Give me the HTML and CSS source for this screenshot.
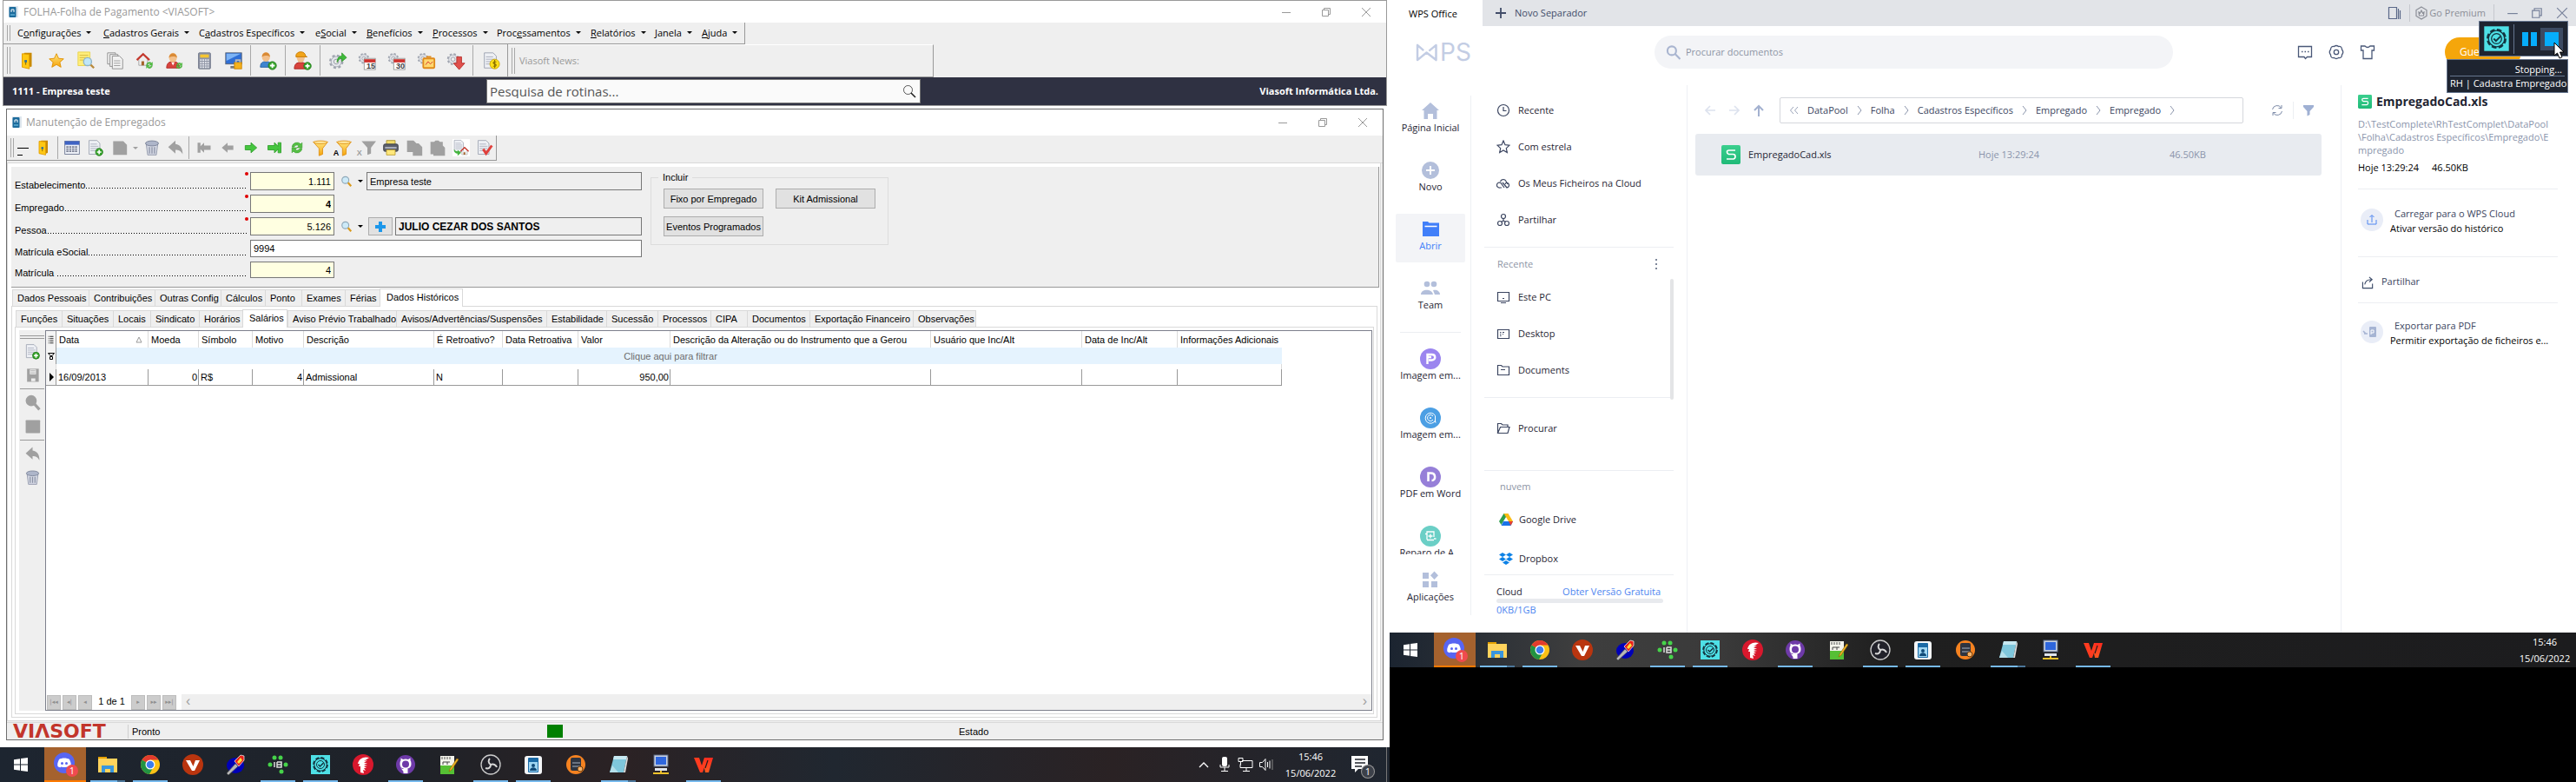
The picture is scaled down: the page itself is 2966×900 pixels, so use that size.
FILE: index.html
```html
<!DOCTYPE html>
<html lang="pt">
<head>
<meta charset="utf-8">
<title>FOLHA-Folha de Pagamento</title>
<link rel="stylesheet" href="styles.css">
</head>
<body>
<svg class="sprite" aria-hidden="true">
  <defs>
    <linearGradient id="gold" x1="0" y1="0" x2="0" y2="1"><stop offset="0" stop-color="#ffe680"/><stop offset="1" stop-color="#f5a30a"/></linearGradient>
    <linearGradient id="green" x1="0" y1="0" x2="0" y2="1"><stop offset="0" stop-color="#3bcf8e"/><stop offset="1" stop-color="#1fba78"/></linearGradient>
    <linearGradient id="wpsred" x1="0" y1="0" x2="0" y2="1"><stop offset="0" stop-color="#ff2a1f"/><stop offset="1" stop-color="#ff5a1f"/></linearGradient>
  </defs>
  <symbol id="app" viewBox="0 0 14 14"><rect x="2" y="0" width="11" height="13" fill="#dfe7ee"/><rect x="2.500" y="1" width="8" height="12" rx="1" fill="#1c6b9c"/><path d="M4 10h5" stroke="#7fd0ef"/><path d="M5 7V4h3v3" fill="none" stroke="#fff"/></symbol>
  <symbol id="door" viewBox="0 0 24 24"><path d="M7 4l2-2h9v17l-2 1z" fill="#c98a00"/><path d="M6 3l9 1v18l-9-2z" fill="#ffc814" stroke="#e09b00"/><rect x="9" y="11" width="3" height="3" fill="#2c6f9e"/><path d="M10.500 14v3" stroke="#7a5a00"/></symbol>
  <symbol id="star" viewBox="0 0 24 24"><path d="M12 3l2.700 6 6.300.6-4.800 4.200L17.700 20 12 16.700 6.300 20l1.500-6.200L3 9.600 9.300 9z" fill="url(#gold)" stroke="#e09000"/></symbol>
  <symbol id="page" viewBox="0 0 24 24"><path d="M3 2h11l4 4v15H3z" fill="#eef0f5" stroke="#9aa0ae"/><path d="M5 7h9M5 10h11M5 13h11M5 16h11" stroke="#a6abb9"/></symbol>
  <symbol id="docsearch" viewBox="0 0 24 24"><path d="M2 1h15v17H2z" fill="#ffee7a" stroke="#e8d24b"/><path d="M4 5h11M4 8h11M4 11h5" stroke="#d4b73c"/><circle cx="14" cy="13" r="5" fill="#bfe6f8" stroke="#8fb4c8" stroke-width="1.500"/><path d="M18 17l4 4" stroke="#b98a3c" stroke-width="2.500"/></symbol>
  <symbol id="docs" viewBox="0 0 24 24"><g fill="#f2f2f2" stroke="#8c8c8c"><path d="M2 2h10v14H2z"/><path d="M5 4h10v15H5z"/><path d="M8 6h9l4 4v12H8z"/></g><path d="M10 12h8M10 15h8M10 18h8" stroke="#999"/></symbol>
  <symbol id="cycle" viewBox="0 0 24 24"><path d="M5 11a7 7 0 0 1 12-4l2-2v7h-7l2.500-2.500A4 4 0 0 0 8 11zM19 13a7 7 0 0 1-12 4l-2 2v-7h7l-2.500 2.500A4 4 0 0 0 16 13z" fill="#57c046" stroke="#339a28" stroke-width=".7"/></symbol>
  <symbol id="house" viewBox="0 0 24 24"><path d="M5 11v9h13v-9" fill="#eee" stroke="#999"/><path d="M2 12L11.500 3 21 12" fill="none" stroke="#c43a2f" stroke-width="3"/><path d="M9 14h4v6H9z" fill="#a5632a"/></symbol>
  <symbol id="homecycle" viewBox="0 0 24 24"><use href="#house" width="20" height="22"/><use href="#cycle" x="11" y="11" width="13" height="13"/></symbol>
  <symbol id="plusball" viewBox="0 0 12 12"><circle cx="6" cy="6" r="5" fill="#38a52c" stroke="#1f7a18"/><path d="M6 3v6M3 6h6" stroke="#fff" stroke-width="2"/></symbol>
  <symbol id="userred" viewBox="0 0 24 24"><path d="M2 21c0-6 3-8 8-8s8 2 8 8z" fill="#d8433d" stroke="#b02a26"/><path d="M8 14l2 4 2-4z" fill="#fff"/><ellipse cx="10" cy="8" rx="5" ry="6" fill="#f3c08b"/><path d="M5 8c0-7 10-7 10 0-3-2-7-2-10 0z" fill="#d98a35"/></symbol>
  <symbol id="usercycle" viewBox="0 0 24 24"><use href="#userred"/><use href="#cycle" x="12" y="12" width="12" height="12"/></symbol>
  <symbol id="useradd" viewBox="0 0 24 24"><path d="M2 20c0-6 3-7 7-7s7 1 7 7z" fill="#3e85cf" stroke="#2561a3"/><ellipse cx="9" cy="7" rx="5" ry="6" fill="#f3c08b"/><path d="M4 7c0-7 10-7 10 0-3-2-7-2-10 0z" fill="#d98a35"/><use href="#plusball" x="11" y="12" width="12" height="12"/></symbol>
  <symbol id="worker" viewBox="0 0 24 24"><path d="M1 22c0-6 3-8 8-8s8 2 8 8z" fill="#d8433d" stroke="#a82421"/><ellipse cx="9" cy="8" rx="5" ry="6" fill="#f3c08b"/><path d="M3 6c0-7 12-7 12 0l2 1H3z" fill="#f2a51a" stroke="#c67a00"/><use href="#plusball" x="12" y="13" width="11" height="11"/></symbol>
  <symbol id="calc" viewBox="0 0 24 24"><rect x="5" y="2" width="15" height="20" rx="1" fill="#8f95a5" stroke="#6f7688"/><rect x="7" y="4" width="11" height="4" fill="#f5c531"/><path d="M7 11h11M7 14h11M7 17h11M7 20h11" stroke="#e7e9f0" stroke-width="2" stroke-dasharray="2 1"/></symbol>
  <symbol id="monitor" viewBox="0 0 24 24"><rect x="2" y="2" width="20" height="14" fill="#2f6fd6" stroke="#5a6373"/><path d="M3 3h18L3 12z" fill="#7db4f5"/><path d="M8 20h8" stroke="#777" stroke-width="3"/><rect x="13" y="14" width="9" height="8" fill="#f6b21b" stroke="#cc8400"/><path d="M15 14v-3h5v3" fill="none" stroke="#b9b9b9" stroke-width="2"/></symbol>
  <symbol id="cog" viewBox="0 0 24 24"><circle cx="10" cy="12" r="7" fill="#d9dce3" stroke="#a0a5b0" stroke-width="4" stroke-dasharray="3 2.500"/><circle cx="10" cy="12" r="6.500" fill="#e3e5ea" stroke="#a9adb7"/><circle cx="10" cy="12" r="3" fill="#efefef" stroke="#8f94a0"/></symbol>
  <symbol id="gearrun" viewBox="0 0 24 24"><use href="#cog" y="1"/><path d="M11 14c0-6 3-8 6-8V2l6 6-6 5V9c-3 0-4 2-6 5z" fill="#3fba3a" stroke="#258a20" stroke-width=".7"/></symbol>
  <symbol id="gearcal" viewBox="0 0 24 24"><use href="#cog" width="18" height="18"/><rect x="8" y="9" width="14" height="14" fill="#fff" stroke="#999"/><path d="M8 10h14v4H8z" fill="#cf2f2b"/></symbol>
  <symbol id="gearbox" viewBox="0 0 24 24"><use href="#cog" width="18" height="18"/><rect x="8" y="9" width="14" height="12" rx="1" fill="#ffd870" stroke="#e08a1a" stroke-width="2"/><path d="M11 17l3-4 3 3 3-3" fill="none" stroke="#d2332d"/><path d="M12 7h6" stroke="#e08a1a" stroke-width="2"/></symbol>
  <symbol id="geardown" viewBox="0 0 24 24"><use href="#cog" width="20" height="20"/><path d="M13 7h6v8h4l-7 8-7-8h4z" fill="#e0504c" stroke="#b82f2c"/></symbol>
  <symbol id="docmoney" viewBox="0 0 24 24"><use href="#page" x="1"/><circle cx="17" cy="16" r="6" fill="#ffe11a" stroke="#c9a400"/><path d="M19 13.500c-4-1.500-5 2-2 2.500s2 4-2 2.500M17 11v10" fill="none" stroke="#8c7000" stroke-width="1.300"/></symbol>
  <symbol id="table" viewBox="0 0 24 24"><rect x="2" y="3" width="20" height="18" fill="#eef1f8" stroke="#66708c"/><path d="M2 3h20v5H2z" fill="#3f63c4"/><path d="M4 11h16M4 14h16M4 17h16" stroke="#7b8194" stroke-width="2" stroke-dasharray="3 1"/></symbol>
  <symbol id="docadd" viewBox="0 0 24 24"><use href="#page"/><use href="#plusball" x="11" y="12" width="12" height="12"/></symbol>
  <symbol id="greydoc" viewBox="0 0 24 24"><path d="M4 3h14l5 5v14H4z" fill="#a0a0a0"/></symbol>
  <symbol id="greysq" viewBox="0 0 24 24"><rect x="2" y="3" width="21" height="19" rx="1" fill="#a0a0a0"/></symbol>
  <symbol id="trash" viewBox="0 0 24 24"><path d="M4 7h16l-2 15H6z" fill="#d3d7e2" stroke="#8a91a5"/><ellipse cx="12" cy="6" rx="9" ry="3.500" fill="#aeb6ca" stroke="#747c92"/><path d="M8.500 11v9M12 11v9M15.500 11v9" stroke="#8a91a5" stroke-width="1.500"/></symbol>
  <symbol id="undo" viewBox="0 0 24 24"><path d="M2 11L12 2v5c7 1 10 6 10 14-3-5-5-6-10-6v5z" fill="#a0a0a0"/></symbol>
  <symbol id="first" viewBox="0 0 24 24"><path d="M3 5h4v5l5-5v4h9v6h-9v4l-5-5v5H3z" fill="#a0a0a0"/></symbol>
  <symbol id="prev" viewBox="0 0 24 24"><path d="M4 12l8-7v4h8v6h-8v4z" fill="#a0a0a0"/></symbol>
  <symbol id="next" viewBox="0 0 24 24"><path d="M20 12l-8-7v4H4v6h8v4z" fill="#45c53f" stroke="#2c9c28"/></symbol>
  <symbol id="last" viewBox="0 0 24 24"><path d="M21 5h-4v5l-5-5v4H3v6h9v4l5-5v5h4z" fill="#45c53f" stroke="#2c9c28"/></symbol>
  <symbol id="funnel" viewBox="0 0 24 24"><path d="M2 4h20l-7 9v8l-5 2V13z" fill="url(#gold)" stroke="#dd8d10"/><ellipse cx="12" cy="4.500" rx="9.500" ry="2" fill="#ffe9a0" stroke="#dd8d10"/></symbol>
  <symbol id="greyfunnel" viewBox="0 0 24 24"><path d="M4 3h20l-7 9v8l-5 2V12z" fill="#a0a0a0"/></symbol>
  <symbol id="printer" viewBox="0 0 24 24"><path d="M6 2h12v6H6z" fill="#f3dd6c" stroke="#a58e2a"/><rect x="2" y="7" width="20" height="10" rx="2" fill="#5b5f6b" stroke="#33363e"/><path d="M4 12h16" stroke="#b8bcc8" stroke-width="2"/><path d="M6 15h12v7H6z" fill="#ffe87c" stroke="#b89a2c"/></symbol>
  <symbol id="copy" viewBox="0 0 24 24"><path d="M2 2h9l4 4h3l5 5v12H10v-5H2z" fill="#a0a0a0"/></symbol>
  <symbol id="paste" viewBox="0 0 24 24"><path d="M2 4h5l2-2h4l2 2h4v5l3 3v11H6v-2H2z" fill="#a0a0a0"/></symbol>
  <symbol id="dochome" viewBox="0 0 24 24"><rect width="24" height="24" fill="#fff"/><use href="#page" width="20" height="20"/><use href="#house" x="10" y="10" width="14" height="14"/><path d="M2 14c0 4 2 6 5 6v3l5-4-5-4v2c-2 0-3-1-5-3z" fill="#45b53f"/></symbol>
  <symbol id="doccheck" viewBox="0 0 24 24"><use href="#page"/><path d="M10 14l4 6 8-11" fill="none" stroke="#e0403c" stroke-width="3.500"/></symbol>
  <symbol id="floppy" viewBox="0 0 24 24"><path d="M4 3h17v19H4z" fill="#a0a0a0"/><path d="M8 4h9v7H8zM10 17h6v4h-6z" fill="#efefef"/><path d="M9 6h7M9 9h7" stroke="#a0a0a0"/></symbol>
  <symbol id="greyzoom" viewBox="0 0 24 24"><circle cx="10" cy="9" r="8" fill="#a0a0a0"/><path d="M15 14l7 8" stroke="#a0a0a0" stroke-width="4"/></symbol>
  <symbol id="lens" viewBox="0 0 16 16"><circle cx="6.500" cy="6" r="4.500" fill="#cdeaf8" stroke="#8fa8b8" stroke-width="1.300"/><path d="M10 9.500l4 4.500" stroke="#d99a1c" stroke-width="2.500"/></symbol>
  <symbol id="magnify" viewBox="0 0 16 16"><circle cx="6.500" cy="6.500" r="5" fill="none" stroke="#555" stroke-width="1"/><path d="M10 10l5 5" stroke="#222" stroke-width="1.600"/></symbol>
  <symbol id="cross" viewBox="0 0 14 14"><path d="M5 1h4v4h4v4H9v4H5V9H1V5h4z" fill="#1c97ea"/></symbol>
  <symbol id="wmin" viewBox="0 0 12 12"><path d="M1 6.500h10" stroke="currentColor"/></symbol>
  <symbol id="wmax" viewBox="0 0 12 12"><path d="M1.500 3.500h7v7h-7zM3.500 3V1.500h7v7H9" fill="none" stroke="currentColor"/></symbol>
  <symbol id="wclose" viewBox="0 0 12 12"><path d="M1 1l10 10M11 1L1 11" stroke="currentColor"/></symbol>

  <symbol id="t-win" viewBox="0 0 24 24"><path d="M4 6.200L11 5.200v6.300H4zM12 5l8-1.100v7.600h-8zM4 12.500h7v6.300l-7-1zM12 12.500h8v7.600L12 19z" fill="#fff"/></symbol>
  <symbol id="t-discord" viewBox="0 0 26 26"><circle cx="12" cy="12" r="12" fill="#5865f2"/><path d="M6 8c3-2 9-2 12 0 2 4 2 6 1.500 8-2 1.500-3 1.500-4 .5-2 .7-5 .7-7 0-1 1-2 1-4-.5C4 14 4 12 6 8z" fill="#fff"/><circle cx="9.500" cy="12.500" r="1.500" fill="#5865f2"/><circle cx="14.500" cy="12.500" r="1.500" fill="#5865f2"/></symbol>
  <symbol id="t-folder" viewBox="0 0 24 24"><path d="M1 3h10v4H1z" fill="#e6a100"/><path d="M1 5h22v16H1z" fill="#ffd35c"/><path d="M5 13h14v8h-4v-4H9v4H5z" fill="#3a96dd"/></symbol>
  <symbol id="t-chrome" viewBox="0 0 24 24"><circle cx="12" cy="12" r="11" fill="#fbc116"/><path d="M12 12L2.500 6.500A11 11 0 0 1 21.500 6.500H12z" fill="#e33b2e"/><path d="M12 12L2.500 6.500A11 11 0 0 0 11 23l5-9z" fill="#229342"/><circle cx="12" cy="12" r="5.500" fill="#fff"/><circle cx="12" cy="12" r="4.300" fill="#3b7ded"/></symbol>
  <symbol id="t-v" viewBox="0 0 24 24"><circle cx="12" cy="12" r="12" fill="#b9350f"/><path d="M4 7h5l3.500 7L15 7h5l-6 12h-3z" fill="#fff"/></symbol>
  <symbol id="t-torch" viewBox="0 0 24 24"><ellipse cx="12" cy="13" rx="10" ry="9" fill="#0000b8"/><path d="M2 22l10-11 3 3L4 24z" fill="#b8b8b8" stroke="#555" stroke-width=".7"/><path d="M11 8l7-7 4 1v5l-6 7z" fill="#e8201a" stroke="#fff" stroke-width=".7"/><path d="M14 9l4-5 2 3-4 4z" fill="#ffde3a"/></symbol>
  <symbol id="t-ib" viewBox="0 0 24 24"><g fill="#46d34a"><circle cx="8" cy="4" r="2.500"/><circle cx="15" cy="4" r="2.500"/><circle cx="3" cy="12" r="2.500"/><circle cx="21" cy="12" r="2.500"/><circle cx="16" cy="20" r="2.500"/></g><path d="M8 9v6M11 9v6h5V9h-5M11 12h5" fill="none" stroke="#ddd" stroke-width="1.500"/></symbol>
  <symbol id="t-check" viewBox="0 0 24 24"><rect x="1" y="1" width="22" height="22" fill="#4ee0e6"/><g fill="none" stroke="#13333f"><circle cx="12" cy="12" r="8" stroke-width="1.800" stroke-dasharray="4.300 2"/><circle cx="12" cy="12" r="7.200" stroke-width="1"/><circle cx="12" cy="12" r="4.500"/><path d="M9.500 12l2 2 4-4" stroke-width="1.500"/></g></symbol>
  <symbol id="t-helmet" viewBox="0 0 24 24"><circle cx="12" cy="12" r="12" fill="#d8182d"/><path d="M19 4c-6-2-12 1-13 7l2 0-1 3 2 0 0 7 4 1-1-4 3 1-2-3 3 0-3-2 4-1-4-1 4-2-4 0 4-3-4 1z" fill="#fff"/></symbol>
  <symbol id="t-github" viewBox="0 0 24 24"><circle cx="12" cy="12" r="11" fill="#6e3aa8"/><path d="M9.500 20v-3c-3 0-3-2-4-2.500M5.500 11c0-2 .5-3 1-3.700L6.500 4.500 9 6a10 10 0 0 1 6 0l2.500-1.500v2.800c.5.700 1 1.700 1 3.700 0 4-2 5-4 5.300v5.700h-5v-5.700C7.500 16 5.500 15 5.500 11z" fill="#fff"/><circle cx="12" cy="11.500" r="4" fill="#6e3aa8"/></symbol>
  <symbol id="t-notes" viewBox="0 0 24 24"><rect x="3" y="2" width="16" height="21" fill="#f4f4ec"/><path d="M3 13h16v10H3z" fill="#56c034"/><path d="M5 3v3M8 3v3M11 3v3M14 3v3" stroke="#555"/><path d="M6 9h8M6 9v3M11 9v3" stroke="#444"/><path d="M22 5l-8 12-1 3 3-2 8-12z" fill="#f0b429" stroke="#8a6100" stroke-width=".6"/></symbol>
  <symbol id="t-obs" viewBox="0 0 24 24"><circle cx="12" cy="12" r="11" fill="#22222a" stroke="#ccc" stroke-width="1.300"/><g fill="none" stroke="#d8d8d8" stroke-width="2"><path d="M12 12c-3-2-3-5-1-7"/><path d="M12 12c3-1 6 0 7 3"/><path d="M12 12c0 4-3 5-6 4"/></g></symbol>
  <symbol id="t-card" viewBox="0 0 24 24"><rect x="2" y="2" width="20" height="21" rx="3" fill="#f4f6f8"/><rect x="6" y="4" width="12" height="17" rx="1" fill="#1a6aa6"/><rect x="7" y="9" width="10" height="11" fill="#9fd6f2"/><circle cx="12" cy="13" r="2" fill="#104a78"/><path d="M8 19c0-5 8-5 8 0z" fill="#104a78"/></symbol>
  <symbol id="t-orange" viewBox="0 0 24 24"><circle cx="12" cy="12" r="11" fill="#f58220"/><rect x="6" y="4" width="12" height="15" rx="2" fill="#2e3440"/><path d="M8 10h9M8 14h9" stroke="#7f8896" stroke-width="1.500"/><circle cx="17" cy="17" r="3" fill="#f7b267" stroke="#6a3a0a"/></symbol>
  <symbol id="t-pad" viewBox="0 0 24 24"><path d="M7 2h15l-4 19H2z" fill="#7fc7dc"/><path d="M7 2h15l-1 4H6z" fill="#c7e9f2"/><path d="M18 21l4-19 1 3-3 16z" fill="#ddd"/><path d="M2 21l3-8 7 8z" fill="#b4dfea"/></symbol>
  <symbol id="t-pc" viewBox="0 0 24 24"><rect x="4" y="1" width="16" height="13" fill="#c9d2e2" stroke="#5c6b85"/><rect x="6" y="3" width="12" height="9" fill="#2e66dd"/><path d="M5 16h14v3H5z" fill="#dfe4ec"/><path d="M12 19v3M3 22h18" stroke="#efc12b" stroke-width="2"/></symbol>
  <symbol id="t-wps" viewBox="0 0 24 24"><path d="M1 4h6l3 9 3-9h4l-6 17H8z" fill="#ff3b1f"/><path d="M14 4h9l-5 17h-4l-1-5z" fill="url(#wpsred)"/><path d="M17 7l-3 9" stroke="#251a1c" stroke-width="1.200"/></symbol>
  <symbol id="y-up" viewBox="0 0 18 18"><path d="M4 12l5-5 5 5" fill="none" stroke="#fff" stroke-width="1.300"/></symbol>
  <symbol id="y-mic" viewBox="0 0 18 18"><rect x="6" y="0" width="6" height="11" rx="2" fill="#fff"/><path d="M4 9v3h10V9M9 12v4M5 16.500h8" fill="none" stroke="#fff"/></symbol>
  <symbol id="y-net" viewBox="0 0 18 18"><path d="M5 4.500h12v8H3v-4M10 12v4M6 16.500h8" fill="none" stroke="#fff"/><path d="M1 1.500h5v4H1zM3.500 5.500v4" fill="none" stroke="#fff"/></symbol>
  <symbol id="y-vol" viewBox="0 0 18 18"><path d="M1.500 6.500h3l3.500-4v13l-3.500-4h-3zM10.500 6v6M13 4.500v9" fill="none" stroke="#fff"/><path d="M16 3v12" stroke="#888"/></symbol>
  <symbol id="y-note" viewBox="0 0 30 30"><path d="M2 3h19v15H10l-4 4v-4H2z" fill="#fff"/><path d="M6 7h12M6 11h12M6 15h8" stroke="#20242d" stroke-width="1.500"/></symbol>

  <symbol id="w-home" viewBox="0 0 24 24"><path d="M12 2L2 11h2.500v10h4.500v-6h6v6h4.500V11H22z" fill="#b3bfdb"/></symbol>
  <symbol id="w-new" viewBox="0 0 24 24"><circle cx="12" cy="12" r="10" fill="#b3bfdb"/><path d="M12 7v10M7 12h10" stroke="#fff" stroke-width="2"/></symbol>
  <symbol id="w-open" viewBox="0 0 24 24"><path d="M3 3h6l1.500 1.500H22V20H3z" fill="#417ff9"/><path d="M5.500 8.500h14" stroke="#fff" stroke-width="1.500"/></symbol>
  <symbol id="w-team" viewBox="0 0 24 24"><g fill="#b3bfdb"><circle cx="8" cy="7" r="3.300"/><circle cx="16" cy="7" r="3.300"/><path d="M1 19c0-7 13-7 14 0zM15 14c4-1 8 1 8 5h-6z"/></g></symbol>
  <symbol id="w-p" viewBox="0 0 24 24"><circle cx="12" cy="12" r="12" fill="#9b85ef"/><path d="M8.500 18V7h5c5 0 5 6.500 0 6.500H10M9 10h4" fill="none" stroke="#fff" stroke-width="2.400"/></symbol>
  <symbol id="w-c" viewBox="0 0 24 24"><circle cx="12" cy="12" r="12" fill="#4c9fe4"/><g fill="none" stroke="#fff" stroke-width="1"><path d="M17.500 15a6 6 0 1 1 0-5.500V17h1"/><path d="M15 14a3.500 3.500 0 1 1 0-4"/><circle cx="12" cy="12" r=".7"/></g></symbol>
  <symbol id="w-d" viewBox="0 0 24 24"><circle cx="12" cy="12" r="12" fill="#967fd8"/><path d="M9.500 17V7.500h3c6 0 6 8.500 1 8.500" fill="none" stroke="#fff" stroke-width="2.500"/></symbol>
  <symbol id="w-r" viewBox="0 0 24 24"><circle cx="12" cy="12" r="12" fill="#6bcfc6"/><path d="M8 16V7h8v6M8 16.500h8M12 9.500v5M9.500 12h5M6 9.500h2M16 15h2.500" fill="none" stroke="#fff" stroke-width="1.300"/></symbol>
  <symbol id="w-apps" viewBox="0 0 24 24"><path d="M3 3h7v7H3zM3 13h7v7H3zM13 13h7v7h-7zM16.500 1.500L21 6.300 16.500 11 12 6.300z" fill="#b3bfdb"/></symbol>
  <symbol id="l-clock" viewBox="0 0 16 16"><circle cx="8" cy="8" r="6.500"/><path d="M8 4v4.500h3.500"/></symbol>
  <symbol id="l-star" viewBox="0 0 16 16"><path d="M8 1l2 4.700 5 .5-3.700 3.400 1 5L8 12l-4.300 2.600 1-5L1 6.200l5-.5z"/></symbol>
  <symbol id="l-cloud" viewBox="0 0 16 16"><path d="M9 13L5 7.500a3 3 0 1 0-1 5.500h2M4.500 6A3.500 3.500 0 0 1 11 5.500M7 7l5 6a2.800 2.800 0 1 0-1-5.500L10 9M11 5.500L13 9"/></symbol>
  <symbol id="l-share" viewBox="0 0 16 16"><circle cx="8" cy="4" r="2.500"/><circle cx="4" cy="12" r="2.500"/><circle cx="12" cy="12" r="2.500"/><path d="M8 6.500V9L5.500 10.500M8 9l2.500 1.500"/></symbol>
  <symbol id="l-pc" viewBox="0 0 16 16"><path d="M1.500 2.500h13v10h-13zM5 14.500h6M7 9.500h2"/></symbol>
  <symbol id="l-desk" viewBox="0 0 16 16"><path d="M1.500 3.500h13v10h-13zM4 6.500h1.500M4 8.500h1.500M4 10.500h1.500M7 6.500h2M7 8.500h1"/></symbol>
  <symbol id="l-doc" viewBox="0 0 16 16"><path d="M1.500 2.500h4l1.500 1.500h7.500v9.500h-13zM5 7.500h5"/></symbol>
  <symbol id="l-open" viewBox="0 0 16 16"><path d="M1.500 13.500v-11h4L7 4h6v2.500M1.500 13.500l3-7H15l-2 7z"/></symbol>
  <symbol id="l-drive" viewBox="0 0 16 16"><path d="M5.500 1h5L5 10l-2.500 4L0 10z" fill="#2e9e4f"/><path d="M5.500 1h5L16 10h-5z" fill="#fbbc13"/><path d="M5 10h11l-2.500 5H2.500z" fill="#1a73e8"/><path d="M11 10h5l-2.500 5z" fill="#e8402f"/><path d="M8 6l2.500 4h-5z" fill="#fff"/></symbol>
  <symbol id="l-drop" viewBox="0 0 16 16"><path d="M4 1l4 2.500L4 6 0 3.500zM12 1l4 2.500L12 6 8 3.500zM4 6l4 2.500L4 11 0 8.500zM12 6l4 2.500-4 2.500-4-2.500zM8 10l4 2.500L8 15l-4-2.500z" fill="#0d82e6"/></symbol>
  <symbol id="l-find" viewBox="0 0 16 16"><circle cx="6.500" cy="6" r="4.700"/><path d="M10 9.500l5.500 5.500"/></symbol>
  <symbol id="x-back" viewBox="0 0 14 14"><path d="M13 7H2M7 2L2 7l5 5" fill="none" stroke="currentColor" stroke-width="1.700"/></symbol>
  <symbol id="x-fwd" viewBox="0 0 14 14"><path d="M1 7h11M7 2l5 5-5 5" fill="none" stroke="currentColor" stroke-width="1.700"/></symbol>
  <symbol id="x-up" viewBox="0 0 14 14"><path d="M7 14V2M2 7l5-5 5 5" fill="none" stroke="currentColor" stroke-width="2"/></symbol>
  <symbol id="x-chev" viewBox="0 0 8 12"><path d="M2 1l4 5-4 5" fill="none" stroke="#8a94ab"/></symbol>
  <symbol id="x-dbl" viewBox="0 0 12 12"><path d="M5 2L1.500 6 5 10M10 2L6.500 6 10 10" fill="none" stroke="#9aa3b8"/></symbol>
  <symbol id="x-sync" viewBox="0 0 14 14"><path d="M1.500 6a5.500 5.500 0 0 1 10-2M12.500 8a5.500 5.500 0 0 1-10 2M12 1v3.500H8.500M2 13V9.500h3.500" fill="none" stroke="#7d8ba8"/></symbol>
  <symbol id="x-funnel" viewBox="0 0 14 14"><path d="M1 1h12v2L8.500 8v4l-3 1.500V8L1 3z" fill="#9fb0d3"/></symbol>
  <symbol id="x-sheet" viewBox="0 0 22 22"><rect width="22" height="22" rx="2" fill="url(#green)"/><path d="M16 6H8.500Q6.500 6 6.500 8t2 2.500h5Q16 10.500 16 13t-2 3H6" fill="none" stroke="#fff" stroke-width="1.700"/></symbol>
  <symbol id="x-msg" viewBox="0 0 18 18"><path d="M1.500 2.500h15v12h-5L9.500 16.500 8 14.500H1.500zM5 8.500h1.500M8.500 8.500H10M12 8.500h1.500" fill="none" stroke="#4a5878" stroke-width="1.300"/></symbol>
  <symbol id="x-set" viewBox="0 0 18 18"><path d="M6.500 2.500Q9 .5 11.500 2.500q4-.5 4 3.500Q18 9 15.500 12q0 4-4 3.500-2.500 2-5 0-4 .5-4-3.500Q0 9 2.500 6q0-4 4-3.500z" fill="none" stroke="#4a5878" stroke-width="1.300"/><circle cx="9" cy="9" r="2.700" fill="none" stroke="#4a5878" stroke-width="1.300"/></symbol>
  <symbol id="x-shirt" viewBox="0 0 18 18"><path d="M1.500 2h4.500q3 3 6 0h4.500v5h-2.500v9.500H4V7H1.500z" fill="none" stroke="#4a5878" stroke-width="1.300"/></symbol>
  <symbol id="x-dock" viewBox="0 0 16 16"><path d="M1.500 1.500h9v13h-9zM12.500 3v12M14.500 5v10" fill="none" stroke="#5a6888" stroke-width="1.200"/></symbol>
  <symbol id="x-prem" viewBox="0 0 16 16"><path d="M8 1l6 3.500v7L8 15l-6-3.500v-7zM5 7l1.500 1L8 5l1.500 3L11 7l-.5 4h-5z" fill="none" stroke="#8b8e97" stroke-width="1.200"/></symbol>
  <symbol id="x-upload" viewBox="0 0 26 26"><circle cx="13" cy="13" r="13" fill="#e9edf7"/><path d="M8 13v5h10v-5M13 16V8M10.500 10L13 7.500l2.500 2.500" fill="none" stroke="#4f86f0"/></symbol>
  <symbol id="x-pdf" viewBox="0 0 26 26"><circle cx="13" cy="13" r="13" fill="#e9edf7"/><rect x="10" y="7" width="8" height="12" rx="1" fill="#a6b4d3"/><path d="M12 16v-5h3v3h-3" fill="none" stroke="#fff"/><path d="M3 12l3 3M4 15h4" stroke="#a6b4d3" stroke-width="1.500"/></symbol>
  <symbol id="x-send" viewBox="0 0 16 16"><path d="M1.500 7v7.500h12V9M4 10q1-6 8-6M9.500 1L13 4 9.500 7" fill="none" stroke="#3b4a68" stroke-width="1.200"/></symbol>
</svg>

<main class="desktop">
<section class="screen">
  <section class="win main-win">
    <header class="title"><svg class="i14"><use href="#app"/></svg><span>FOLHA-Folha de Pagamento &lt;VIASOFT&gt;</span>
      <div class="ctl"><button aria-label="Minimizar"><svg><use href="#wmin"/></svg></button><button aria-label="Restaurar"><svg><use href="#wmax"/></svg></button><button aria-label="Fechar"><svg><use href="#wclose"/></svg></button></div></header>
    <nav class="menu"><i class="grip"></i>
      <div class="menu-items"><button>C<u>o</u>nfigurações</button><button><u>C</u>adastros Gerais</button><button>C<u>a</u>dastros Específicos</button><button>e<u>S</u>ocial</button><button><u>B</u>enefícios</button><button><u>P</u>rocessos</button><button>Proc<u>e</u>ssamentos</button><button><u>R</u>elatórios</button><button><u>J</u>anela</button><button><u>A</u>juda</button></div>
    </nav>
    <div class="bars">
      <div class="bar bar-wide"><i class="grip"></i>
        <button aria-label="Sair"><svg><use href="#door"/></svg></button><button aria-label="Favoritos"><svg><use href="#star"/></svg></button><button aria-label="Consultar"><svg><use href="#docsearch"/></svg></button><button aria-label="Documentos"><svg><use href="#docs"/></svg></button><button aria-label="Trocar empresa"><svg><use href="#homecycle"/></svg></button><button aria-label="Trocar usuário"><svg><use href="#usercycle"/></svg></button><button aria-label="Calculadora"><svg><use href="#calc"/></svg></button><button aria-label="Bloquear"><svg><use href="#monitor"/></svg></button><i class="sep"></i><button aria-label="Incluir pessoa"><svg><use href="#useradd"/></svg></button><i class="sep"></i><button aria-label="Incluir empregado"><svg><use href="#worker"/></svg></button><i class="sep"></i><button aria-label="Processar"><svg><use href="#gearrun"/></svg></button><button aria-label="Quinzena" class="tagged"><svg><use href="#gearcal"/></svg><span class="day">15</span></button><button aria-label="Mensal" class="tagged"><svg><use href="#gearcal"/></svg><span class="day">30</span></button><button aria-label="Férias"><svg><use href="#gearbox"/></svg></button><button aria-label="Rescisão"><svg><use href="#geardown"/></svg></button><i class="sep"></i><button aria-label="Recibo"><svg><use href="#docmoney"/></svg></button>
      </div>
      <div class="news"><i class="grip"></i><span>Viasoft News:</span></div>
    </div>
    <div class="dark"><strong>1111 - Empresa teste</strong>
      <label class="seek"><input type="text" placeholder="Pesquisa de rotinas..." aria-label="Pesquisa de rotinas"><svg><use href="#magnify"/></svg></label>
      <strong class="owner">Viasoft Informática Ltda.</strong></div>
  </section>

  <section class="win child">
    <header class="title tall"><svg class="i14"><use href="#app"/></svg><span>Manutenção de Empregados</span>
      <div class="ctl"><button aria-label="Minimizar"><svg><use href="#wmin"/></svg></button><button aria-label="Restaurar"><svg><use href="#wmax"/></svg></button><button aria-label="Fechar"><svg><use href="#wclose"/></svg></button></div></header>
    <div class="band"><div class="bar bar-small"><i class="grip"></i><span class="dash"></span>
      <button aria-label="Sair"><svg><use href="#door"/></svg></button><i class="sep"></i><button aria-label="Tabela"><svg><use href="#table"/></svg></button><button aria-label="Incluir"><svg><use href="#docadd"/></svg></button><button aria-label="Gravar"><svg><use href="#greydoc"/></svg></button><button class="drop" aria-label="Mais"></button><button aria-label="Excluir"><svg><use href="#trash"/></svg></button><button aria-label="Desfazer"><svg><use href="#undo"/></svg></button><i class="sep"></i><button aria-label="Primeiro"><svg><use href="#first"/></svg></button><button aria-label="Anterior"><svg><use href="#prev"/></svg></button><button aria-label="Próximo"><svg><use href="#next"/></svg></button><button aria-label="Último"><svg><use href="#last"/></svg></button><button aria-label="Atualizar"><svg><use href="#cycle"/></svg></button><button aria-label="Filtro"><svg><use href="#funnel"/></svg></button><button aria-label="Filtro avançado" class="tagged"><svg><use href="#funnel"/></svg><span class="letter">A</span></button><button aria-label="Limpar filtro" class="tagged"><svg><use href="#greyfunnel"/></svg><span class="letter dim">X</span></button><button aria-label="Imprimir"><svg><use href="#printer"/></svg></button><button aria-label="Copiar"><svg><use href="#copy"/></svg></button><button aria-label="Colar"><svg><use href="#paste"/></svg></button><button aria-label="Exportar"><svg><use href="#dochome"/></svg></button><button aria-label="Validar"><svg><use href="#doccheck"/></svg></button>
    </div></div>
    <div class="frame">
      <form class="form">
        <div class="fields">
          <div class="row"><label for="f1">Estabelecimento</label><span class="req"><input id="f1" class="num" value="1.111"></span><button type="button" class="pick" aria-label="Localizar"><svg><use href="#lens"/></svg></button><input class="ro" value="Empresa teste" readonly aria-label="Nome do estabelecimento"></div>
          <div class="row"><label for="f2">Empregado</label><span class="req"><input id="f2" class="num strong" value="4"></span></div>
          <div class="row"><label for="f3">Pessoa</label><span class="req"><input id="f3" class="num" value="5.126"></span><button type="button" class="pick" aria-label="Localizar"><svg><use href="#lens"/></svg></button><button type="button" class="add" aria-label="Adicionar"><svg><use href="#cross"/></svg></button><input class="ro strong" value="JULIO CEZAR DOS SANTOS" readonly aria-label="Nome da pessoa"></div>
          <div class="row"><label for="f4">Matrícula eSocial</label><input id="f4" class="wide" value="9994"></div>
          <div class="row"><label for="f5">Matrícula </label><span><input id="f5" class="num" value="4"></span></div>
        </div>
        <fieldset><legend>Incluir</legend><button type="button">Fixo por Empregado</button><button type="button">Kit Admissional</button><button type="button">Eventos Programados</button></fieldset>
      </form>
      <nav class="tabs tabs-a"><button>Dados Pessoais</button><button>Contribuições</button><button>Outras Config</button><button>Cálculos</button><button>Ponto</button><button>Exames</button><button>Férias</button><button class="on">Dados Históricos</button></nav>
      <div class="page-a">
        <nav class="tabs tabs-b"><button>Funções</button><button>Situações</button><button>Locais</button><button>Sindicato</button><button>Horários</button><button class="on">Salários</button><button>Aviso Prévio Trabalhado</button><button>Avisos/Advertências/Suspensões</button><button>Estabilidade</button><button>Sucessão</button><button>Processos</button><button>CIPA</button><button>Documentos</button><button>Exportação Financeiro</button><button>Observações</button></nav>
        <div class="page-b">
          <div class="side"><i class="hgrip"></i><button aria-label="Incluir"><svg><use href="#docadd"/></svg></button><button aria-label="Gravar"><svg><use href="#floppy"/></svg></button><i class="hsep"></i><button aria-label="Consultar"><svg><use href="#greyzoom"/></svg></button><button aria-label="Parar"><svg><use href="#greysq"/></svg></button><i class="hsep"></i><button aria-label="Desfazer"><svg><use href="#undo"/></svg></button><button aria-label="Excluir"><svg><use href="#trash"/></svg></button></div>
          <div class="grid">
            <table>
              <colgroup><col class="c12"><col class="c106"><col class="c58"><col class="c62"><col class="c59"><col class="c150"><col class="c79"><col class="c87"><col class="c106"><col class="c300"><col class="c174"><col class="c110"><col class="c120"></colgroup>
              <thead><tr><th class="ind"><svg viewBox="0 0 8 12"><path d="M0 1.500h1M2 1.500h5M0 4.500h1M2 4.500h5M0 7.500h1M2 7.500h5M0 10.500h1M2 10.500h5" stroke="#000"/></svg></th><th>Data<svg class="sort" viewBox="0 0 8 8"><path d="M4 1L7 7H1z" fill="none" stroke="#999"/></svg></th><th>Moeda</th><th>Símbolo</th><th>Motivo</th><th>Descrição</th><th>É Retroativo?</th><th>Data Retroativa</th><th>Valor</th><th>Descrição da Alteração ou do Instrumento que a Gerou</th><th>Usuário que Inc/Alt</th><th>Data de Inc/Alt</th><th>Informações Adicionais</th></tr></thead>
              <tbody><tr class="filter"><td class="ind"><svg viewBox="0 0 8 10"><path d="M.5 1.500h7L5 4.500H3zM2.500 5.500h3v3h-3z" fill="none" stroke="#000"/></svg></td><td colspan="12">Clique aqui para filtrar</td></tr>
              <tr class="gap"><td class="ind"></td><td colspan="12"></td></tr>
              <tr class="data"><td class="ind"><svg viewBox="0 0 8 10"><path d="M2 0l5 5-5 5z"/></svg></td><td>16/09/2013</td><td class="r">0</td><td>R$</td><td class="r">4</td><td>Admissional</td><td>N</td><td></td><td class="r">950,00</td><td></td><td></td><td></td><td></td></tr></tbody>
            </table>
            <div class="pager"><button aria-label="Primeira">|◂◂</button><button aria-label="Página anterior">◂|</button><button aria-label="Anterior">◂</button><span>1 de 1</span><button aria-label="Próximo">▸</button><button aria-label="Página seguinte">▸▸</button><button aria-label="Última">▸▸|</button><div class="hscroll"><span>‹</span><span>›</span></div></div>
          </div>
        </div>
      </div>
    </div>
    <footer class="status"><b class="brand">VIΛSOFT</b><span class="ready">Pronto</span><span class="led"></span><span class="state">Estado</span></footer>
  </section>

  <footer class="taskbar tb-a">
    <button class="start" aria-label="Iniciar"><svg><use href="#t-win"/></svg></button>
    <button class="hot tagged" aria-label="Discord"><svg><use href="#t-discord"/></svg><span class="badge">1</span></button><button class="run multi" aria-label="Explorador"><svg><use href="#t-folder"/></svg></button><button class="run" aria-label="Chrome"><svg><use href="#t-chrome"/></svg></button><button aria-label="Viasoft"><svg><use href="#t-v"/></svg></button><button aria-label="Ferramenta"><svg><use href="#t-torch"/></svg></button><button class="run" aria-label="IBExpert"><svg><use href="#t-ib"/></svg></button><button class="run" aria-label="TestComplete"><svg><use href="#t-check"/></svg></button><button aria-label="Delphi"><svg><use href="#t-helmet"/></svg></button><button class="run" aria-label="GitHub"><svg><use href="#t-github"/></svg></button><button aria-label="Editor"><svg><use href="#t-notes"/></svg></button><button class="run" aria-label="OBS"><svg><use href="#t-obs"/></svg></button><button class="run" aria-label="Folha"><svg><use href="#t-card"/></svg></button><button aria-label="Servidor"><svg><use href="#t-orange"/></svg></button><button class="run multi" aria-label="Bloco de notas"><svg><use href="#t-pad"/></svg></button><button aria-label="Área remota"><svg><use href="#t-pc"/></svg></button><button class="run" aria-label="WPS"><svg><use href="#t-wps"/></svg></button>
    <div class="tray"><svg><use href="#y-up"/></svg><svg><use href="#y-mic"/></svg><svg><use href="#y-net"/></svg><svg><use href="#y-vol"/></svg><time>15:46<br>15/06/2022</time><div class="note tagged"><svg><use href="#y-note"/></svg><span class="badge">1</span></div><i class="peek"></i></div>
  </footer>
</section>

<section class="screen second">
  <section class="wps">
    <header class="wtabs"><a class="wtab" href="#">WPS Office</a><button class="newtab"><svg viewBox="0 0 12 12"><path d="M6 0v12M0 6h12" stroke="#414c68" stroke-width="1.800"/></svg>Novo Separador</button>
      <div class="wright"><button aria-label="Painel"><svg><use href="#x-dock"/></svg></button><button class="premium"><svg><use href="#x-prem"/></svg>Go Premium</button><div class="wctl"><button aria-label="Minimizar"><svg><use href="#wmin"/></svg></button><button aria-label="Restaurar"><svg><use href="#wmax"/></svg></button><button aria-label="Fechar"><svg><use href="#wclose"/></svg></button></div></div></header>
    <div class="wtop"><div class="logo"><svg viewBox="0 0 26 22"><path d="M9 8.500L1.500 2v18L12.500 11 24 20V2l-8.500 7" fill="none" stroke="#c3cde4" stroke-width="2.600" stroke-linejoin="round"/></svg><span>PS</span></div>
      <label class="pill"><svg class="line"><use href="#l-find"/></svg><input type="text" placeholder="Procurar documentos" aria-label="Procurar documentos"></label>
      <div class="acts"><button aria-label="Mensagens"><svg><use href="#x-msg"/></svg></button><button aria-label="Definições"><svg><use href="#x-set"/></svg></button><button aria-label="Temas"><svg><use href="#x-shirt"/></svg></button></div>
      <button class="guest">Guest</button></div>
    <div class="wbody">
      <nav class="rail"><div class="rail-list"><a href="#"><svg><use href="#w-home"/></svg>Página Inicial</a><a href="#"><svg><use href="#w-new"/></svg>Novo</a><a href="#" class="on"><svg><use href="#w-open"/></svg>Abrir</a><a href="#"><svg><use href="#w-team"/></svg>Team</a><hr><a href="#"><svg><use href="#w-p"/></svg>Imagem em...</a><a href="#"><svg><use href="#w-c"/></svg>Imagem em...</a><a href="#"><svg><use href="#w-d"/></svg>PDF em Word</a><a href="#"><svg><use href="#w-r"/></svg>Reparo de A...</a></div><a href="#"><svg><use href="#w-apps"/></svg>Aplicações</a></nav>
      <nav class="places">
        <ul><li><a href="#"><svg><use href="#l-clock"/></svg>Recente</a></li><li><a href="#"><svg><use href="#l-star"/></svg>Com estrela</a></li><li><a href="#"><svg><use href="#l-cloud"/></svg>Os Meus Ficheiros na Cloud</a></li><li><a href="#"><svg><use href="#l-share"/></svg>Partilhar</a></li></ul>
        <div class="recent"><h2>Recente<button aria-label="Mais opções"><svg viewBox="0 0 4 14"><path d="M1 1h2v2H1zM1 6h2v2H1zM1 11h2v2H1z" fill="#7d8699"/></svg></button></h2>
        <ul><li><a href="#"><svg><use href="#l-pc"/></svg>Este PC</a></li><li><a href="#"><svg><use href="#l-desk"/></svg>Desktop</a></li><li><a href="#"><svg><use href="#l-doc"/></svg>Documents</a></li></ul><i class="thumb"></i></div>
        <ul class="browse"><li><a href="#"><svg><use href="#l-open"/></svg>Procurar</a></li></ul>
        <div class="clouds"><h2>nuvem</h2><a href="#"><svg><use href="#l-drive"/></svg>Google Drive</a><a href="#"><svg><use href="#l-drop"/></svg>Dropbox</a></div>
        <div class="quota"><p><span>Cloud</span><a href="#">Obter Versão Gratuita</a></p><div class="meter"></div><small>0KB/1GB</small></div>
      </nav>
      <section class="files">
        <div class="path"><button class="faint" aria-label="Voltar"><svg><use href="#x-back"/></svg></button><button class="faint" aria-label="Avançar"><svg><use href="#x-fwd"/></svg></button><button aria-label="Subir"><svg><use href="#x-up"/></svg></button>
          <div class="crumbs"><svg class="dbl"><use href="#x-dbl"/></svg><a href="#">DataPool</a><svg><use href="#x-chev"/></svg><a href="#">Folha</a><svg><use href="#x-chev"/></svg><a href="#">Cadastros Específicos</a><svg><use href="#x-chev"/></svg><a href="#">Empregado</a><svg><use href="#x-chev"/></svg><a href="#">Empregado</a><svg><use href="#x-chev"/></svg></div>
          <button class="sync" aria-label="Atualizar"><svg><use href="#x-sync"/></svg></button><button class="filt" aria-label="Filtrar"><svg><use href="#x-funnel"/></svg></button></div>
        <a class="file" href="#"><svg><use href="#x-sheet"/></svg><span class="fname">EmpregadoCad.xls</span><span class="fdate">Hoje 13:29:24</span><span class="fsize">46.50KB</span></a>
      </section>
      <aside class="info">
        <h1><svg><use href="#x-sheet"/></svg>EmpregadoCad.xls</h1>
        <p class="where">D:\TestComplete\RhTestComplet\DataPool<br>\Folha\Cadastros Específicos\Empregado\E<br>mpregado</p>
        <p class="meta"><span>Hoje 13:29:24</span><span>46.50KB</span></p>
        <a class="opt up" href="#"><svg><use href="#x-upload"/></svg><span><b>Carregar para o WPS Cloud</b>Ativar versão do histórico</span></a>
        <a class="opt send" href="#"><svg><use href="#x-send"/></svg>Partilhar</a>
        <a class="opt pdf" href="#"><svg><use href="#x-pdf"/></svg><span><b>Exportar para PDF</b>Permitir exportação de ficheiros e...</span></a>
      </aside>
    </div>
    <div class="recorder"><div class="rec-bar"><svg class="rec-logo"><use href="#t-check"/></svg><button class="pause" aria-label="Pausar"><i></i><i></i></button><button class="stop" aria-label="Parar"><i></i></button></div>
      <div class="rec-tip"><p>Stopping...</p><p>RH | Cadastra Empregado</p></div>
      <svg class="cursor" viewBox="0 0 13 20"><path d="M1 1v15l3.500-3 2.500 6 3-1.300-2.500-5.700H12z" fill="#fff" stroke="#000"/></svg></div>
  </section>
  <footer class="taskbar tb-b">
    <button class="start" aria-label="Iniciar"><svg><use href="#t-win"/></svg></button>
    <button class="hot tagged" aria-label="Discord"><svg><use href="#t-discord"/></svg><span class="badge">1</span></button><button class="run multi" aria-label="Explorador"><svg><use href="#t-folder"/></svg></button><button class="run" aria-label="Chrome"><svg><use href="#t-chrome"/></svg></button><button aria-label="Viasoft"><svg><use href="#t-v"/></svg></button><button aria-label="Ferramenta"><svg><use href="#t-torch"/></svg></button><button class="run" aria-label="IBExpert"><svg><use href="#t-ib"/></svg></button><button class="run" aria-label="TestComplete"><svg><use href="#t-check"/></svg></button><button aria-label="Delphi"><svg><use href="#t-helmet"/></svg></button><button class="run" aria-label="GitHub"><svg><use href="#t-github"/></svg></button><button aria-label="Editor"><svg><use href="#t-notes"/></svg></button><button class="run" aria-label="OBS"><svg><use href="#t-obs"/></svg></button><button class="run" aria-label="Folha"><svg><use href="#t-card"/></svg></button><button aria-label="Servidor"><svg><use href="#t-orange"/></svg></button><button class="run multi" aria-label="Bloco de notas"><svg><use href="#t-pad"/></svg></button><button aria-label="Área remota"><svg><use href="#t-pc"/></svg></button><button class="run" aria-label="WPS"><svg><use href="#t-wps"/></svg></button>
    <div class="tray"><time>15:46<br>15/06/2022</time></div>
  </footer>
</section>
</main>
</body>
</html>
```
FILE: styles.css
```css
* { box-sizing: border-box; }
body { margin: 0; background: #000; color: #000; font: 11px/16px "Open Sans", "Noto Sans", sans-serif; }
button, input { font: inherit; color: inherit; margin: 0; padding: 0; border: 0; background: none; border-radius: 0; }
button { text-align: left; white-space: nowrap; }
a { color: inherit; text-decoration: none; }
svg { display: block; flex: none; }
ul, p, h1, h2 { margin: 0; padding: 0; list-style: none; font-weight: 400; font-size: inherit; }
.sprite { position: absolute; width: 0; height: 0; }
.tagged { position: relative; }
.day { position: absolute; right: 6px; bottom: 7px; width: 14px; text-align: center; font: 700 9px/9px "Liberation Sans", sans-serif; color: #444; }
.letter { position: absolute; left: 1px; bottom: 3px; font: 700 9px/9px "Liberation Sans", sans-serif; }
.dim { color: #a0a0a0; }
.badge { position: absolute; right: 9px; bottom: 4px; width: 14px; height: 14px; border-radius: 7px; background: #f04a4e; text-align: center; font-size: 11px; line-height: 14px; }

.desktop { display: grid; grid-template: minmax(0, 1fr) / 1600fr 1366fr; height: 100vh; min-height: 720px; }
.screen { display: flex; flex-direction: column; min-width: 0; background: #fff; }

/* payroll application */
.win { border: 1px solid #999; background: #efefef; }
.main-win { margin: 0 3px; }
.title { display: flex; align-items: center; height: 25px; padding-left: 4px; background: #fff; color: #999; }
.title > span { font-size: 12px; }
.title .i14 { width: 14px; height: 14px; margin-right: 4px; }
.title.tall { height: 30px; }
.main-win .title .i14 { margin-right: 5px; }
.ctl { display: flex; margin-left: auto; }
.ctl button { width: 46px; display: grid; place-items: center; }
.ctl svg { width: 12px; height: 12px; }
.grip { width: 4px; margin: 3px 5px 3px 4px; border: solid #a8a8a8; border-width: 0 1px; flex: none; }
.menu { display: flex; width: 854px; height: 25px; border-right: 1px solid #999; border-bottom: 1px solid #999; }
.menu-items { display: grid; grid-template-columns: 99px 110px 134px 59px 76px 74px 108px 74px 54px 46px; padding-left: 3px; align-items: center; }
.menu-items button::after, .pick::after, .drop::after { content: ""; display: inline-block; vertical-align: 3px; margin-left: 6px; border: solid transparent; border-width: 3px 3px 0; border-top-color: #000; }
.bars { display: flex; height: 38px; }
.bar { display: flex; border-right: 1px solid #999; border-bottom: 1px solid #999; }
.bar button { display: grid; place-items: center; width: 34px; }
.bar svg { width: 22px; height: 22px; }
.bar .grip { margin-right: 2px; }
.sep { width: 1px; margin: 1px 3px 1px 2px; background: #a8a8a8; flex: none; }
.bar-wide { width: 581px; }
.news { display: flex; align-items: center; width: 490px; border: solid #999; border-width: 0 1px 1px 0; border-top: 1px solid #fff; color: #999; }
.news .grip { align-self: stretch; }
.dark { display: grid; grid-template-columns: 556px 500px 1fr; align-items: center; height: 32px; background: #2f3142; color: #fff; font-size: 12px; }
.dark strong { padding-left: 10px; font-size: 11px; }
.dark .owner { text-align: right; padding-right: 9px; }
.seek { display: flex; align-items: center; height: 28px; padding: 0 4px 0 3px; background: #fafafa; border: 1px solid #777; }
.seek input { flex: 1; font-size: 15px; color: #555; outline: 0; }
.seek input::placeholder { color: #555; }
.seek svg { width: 16px; height: 16px; }

.child { flex: 1; min-height: 0; display: flex; flex-direction: column; margin: 3px 7px 8px; border-color: #6e6e6e; font-family: "Liberation Sans", Arial, sans-serif; }
.child .title { font-family: "Open Sans", "Noto Sans", sans-serif; }
.band { height: 32px; border-bottom: 1px solid #d9d9d9; }
.bar-small { width: 564px; height: 29px; }
.bar-small button { width: 27px; }
.bar-small .sep { margin-right: 3px; }
.bar-small svg { width: 20px; height: 20px; }
.bar-small .drop { width: 11px; }
.drop::after { border-top-color: #a0a0a0; margin: 0; }
.dash { width: 13px; height: 9px; margin: 14px 4px 0 2px; border-top: 1px solid #000; background: linear-gradient(#000, #000) 0 100% / 6px 1px no-repeat; }
.frame { flex: 1; min-height: 0; display: flex; flex-direction: column; border: solid #d9d9d9; border-width: 0 1px 1px; margin: 0 2px 1px 0; background: #fff; }
.form { display: flex; align-items: flex-start; margin: 4px 1px 0 4px; padding: 6px 4px 9px; height: 139px; background: #efefef; border: solid #999; border-width: 0 1px 1px 0; }
.fields { display: grid; width: 722px; grid-template-rows: 21px 21px 21px 20px 19px; gap: 5px; }
.row { display: flex; }
.row label { display: flex; align-items: flex-end; width: 267px; margin-right: 4px; line-height: 12px; white-space: pre; }
.row label::after { content: ""; flex: 1; height: 1px; margin: 0 0 2px 1px; background: repeating-linear-gradient(90deg, #000 0 1px, transparent 1px 3px); }
.row span { position: relative; display: flex; width: 97px; }
.req::before { content: ""; position: absolute; left: -6px; top: 0; width: 4px; height: 4px; border-radius: 2px; background: #e00000; }
.row input { height: 100%; border: 1px solid #777; padding: 0 3px; }
.row .num { width: 97px; background: #ffffe1; text-align: right; }
.row .ro { flex: 1; min-width: 0; background: #efefef; }
.row .wide { flex: 1; min-width: 0; background: #fff; }
.row .strong { font-weight: 700; }
.fields .ro.strong { font-size: 12px; }
.pick { display: flex; align-items: center; width: 37px; padding-left: 7px; }
.pick svg { width: 14px; height: 14px; }
.add { display: grid; place-items: center; width: 28px; margin: 0 3px 0 2px; background: #e1e1e1; border: 1px solid #adadad; }
.row .add svg { width: 14px; height: 14px; }
fieldset { display: grid; grid-template-columns: 115px 115px; grid-auto-rows: 23px; gap: 9px 14px; width: 273px; height: 84px; margin: 0 0 0 10px; padding: 7px 14px 0; border: 1px solid #dcdcdc; }
legend { padding: 0 5px; margin-left: -6px; line-height: 12px; }
fieldset button { text-align: center; background: #e1e1e1; border: 1px solid #adadad; }
.tabs { display: grid; align-items: end; height: 21px; flex: none; }
.tabs button { height: 19px; padding-left: 5px; background: #efefef; border: 1px solid #d9d9d9; border-width: 1px 0 0 1px; overflow: visible; }
.tabs button:last-child { border-right-width: 1px; }
.tabs .on { height: 21px; margin-bottom: -1px; padding-left: 7px; padding-bottom: 3px; background: #fff; border-right-width: 1px; z-index: 1; }
.tabs-a { grid-template-columns: 88px 76px 76px 51px 42px 50px 40px 96px; margin-left: 5px; }
.page-a { flex: 1; min-height: 0; display: flex; flex-direction: column; margin: 0 3px 3px 4px; padding: 2px 3px 3px; border: 1px solid #d9d9d9; }
.tabs-b { grid-template-columns: 53px 59px 43px 56px 50px 52px 125px 173px 69px 59px 61px 42px 72px 119px 73px; margin-left: 1px; }
.page-b { flex: 1; min-height: 0; display: flex; padding: 3px 1px 3px 4px; border: 1px solid #d9d9d9; }
.side { width: 30px; padding: 6px 1px; background: #efefef; }
.side button { display: grid; place-items: center; width: 100%; height: 27px; }
.side svg { width: 19px; height: 19px; }
.hgrip { display: block; height: 4px; margin-bottom: 1px; border: solid #999; border-width: 1px 0; }
.hsep { display: block; height: 1px; margin: 2px 0; background: #999; }
.grid { flex: 1; min-width: 0; display: flex; flex-direction: column; border: 1px solid #7d808c; }
table { width: 1423px; table-layout: fixed; border-spacing: 0; }
.c12 { width: 12px; } .c58 { width: 58px; } .c59 { width: 59px; } .c62 { width: 62px; } .c79 { width: 79px; } .c87 { width: 87px; }
.c106 { width: 106px; } .c110 { width: 110px; } .c120 { width: 120px; } .c150 { width: 150px; } .c174 { width: 174px; } .c300 { width: 300px; }
th, td { height: 19px; padding: 0 0 0 3px; text-align: left; font-weight: 400; line-height: 14px; white-space: nowrap; border-right: 1px solid #dcdcdc; }
th:last-child { border-right: 0; }
.sort { float: right; width: 8px; height: 8px; margin: 3px 6px 0 0; }
th.ind, td.ind { padding: 0 0 0 2px; background: #f4f4f4; border-right-color: #999; }
.ind svg { width: 8px; height: 10px; }
.filter td:last-child { text-align: center; color: #6d6d6d; background: #e5f3fe; border: 0; }
.gap td { height: 6px; border-right-color: #dcdcdc; }
.data td { padding-left: 2px; border-right-color: #999; border-bottom: 1px solid #999; }
.data .r { text-align: right; padding: 0 1px 0 0; }
.pager { display: flex; height: 18px; margin-top: auto; }
.pager button { width: 16px; height: 17px; margin: 1px 1px 0; text-align: center; font: 7px/15px "DejaVu Sans", sans-serif; color: #8f8f8f; background: #cccccc; border: 1px solid #bdbdbd; }
.pager > span { width: 43px; text-align: center; }
.hscroll { flex: 1; display: flex; justify-content: space-between; margin-left: 5px; padding: 0 5px; font-size: 16px; color: #a0a0a0; background: #efefef; }
.status { display: grid; grid-template-columns: 139px 483px 474px 1fr; align-items: center; height: 20px; flex: none; border-top: 1px solid #d9d9d9; }
.brand { padding-left: 7px; font: 700 22px/18px "DejaVu Sans", sans-serif; color: #c2352b; }
.ready { padding-left: 4px; border-left: 1px solid #cfcfcf; }
.led { width: 18px; height: 15px; background: #008000; }

/* taskbars */
.taskbar { display: flex; height: 40px; flex: none; color: #fff; }
.tb-a { background: linear-gradient(90deg, #1d2530, #1f2228 30%, #2b2224 45%, #202730 60%, #2a2224 80%, #1f2630); }
.tb-b { background: linear-gradient(90deg, #1b2430, #3e3e3e 16%, #3a3a3a 28%, #1f1f1f 42%, #1c1c1e); }
.taskbar button { display: grid; place-items: center; width: 48px; height: 40px; margin-right: 1px; }
.taskbar .start { margin-right: 3px; }
.taskbar button svg { width: 24px; height: 24px; }
.taskbar .hot { background: #a5622e; border-bottom: 2px solid #ff7a00; }
.taskbar .hot svg { width: 26px; height: 26px; }
.taskbar .run { background: linear-gradient(#76b9ed, #76b9ed) 50% 100% / 40px 2px no-repeat; }
.taskbar .multi { background: linear-gradient(90deg, #76b9ed 31px, #4c7699 31px) 50% 100% / 40px 2px no-repeat; }
.tray { display: flex; align-items: center; margin-left: auto; }
.tray > svg { width: 18px; height: 18px; margin-right: 6px; }
.tray time { width: 72px; text-align: center; line-height: 19px; }
.note { margin: 4px 12px 0 9px; }
.note svg { width: 30px; height: 30px; }
.note .badge { right: 2px; bottom: 2px; background: #3c4049; box-shadow: 0 0 0 1px #999; }
.peek { align-self: stretch; width: 4px; border-left: 1px solid #777; }

/* document manager */
.second { display: grid; grid-template-rows: minmax(0, 728fr) 40px 132fr; background: #000; }
.wps { position: relative; display: flex; flex-direction: column; min-height: 0; background: #fff; color: #1f2533; }
.wtabs { display: flex; height: 30px; flex: none; background: #e2e4e8; }
.wtab { width: 107px; padding: 8px 22px 0; background: #fff; color: #000; }
.newtab { display: flex; align-items: center; gap: 10px; padding-left: 15px; color: #414c68; }
.newtab svg { width: 12px; height: 12px; }
.wright { display: flex; align-items: center; margin-left: auto; color: #8b8e97; }
.wright > button:first-child { width: 25px; }
.wright svg { width: 16px; height: 16px; }
.premium { display: flex; align-items: center; gap: 1px; height: 20px; padding: 0 9px 0 5px; border: solid #c6c8ce; border-width: 0 1px; }
.wctl { display: flex; color: #77819a; }
.wctl button { width: 29px; padding-left: 6px; }
.wctl button:first-child { padding-left: 14px; width: 36px; }
.wctl svg { width: 14px; height: 14px; }
.wtop { display: flex; height: 68px; flex: none; padding-top: 11px; }
.logo { display: flex; width: 305px; padding: 9px 0 0 30px; color: #c3cde4; }
.logo svg { width: 26px; height: 21px; }
.logo span { font: 28px/20px Inter, sans-serif; padding-left: 2px; }
.pill { display: flex; align-items: center; width: 597px; height: 38px; padding-left: 13px; border-radius: 19px; background: #f3f4f7; }
.pill svg { width: 17px; height: 17px; margin-right: 6px; stroke: #a9b5d0; stroke-width: 2; fill: none; }
.pill input { flex: 1; color: #8d94a5; outline: 0; }
.pill input::placeholder { color: #8d94a5; }
.acts { display: flex; align-items: flex-start; gap: 18px; margin: 10px 80px 0 auto; }
.acts svg { width: 18px; height: 18px; }
.guest { width: 88px; height: 34px; margin: 2px 63px 0 0; padding-left: 17px; border-radius: 17px; background: #f5a60b; color: #fff; font-size: 12px; }
.wbody { flex: 1; display: flex; min-height: 0; }
.rail { display: flex; flex-direction: column; width: 94px; margin: 12px 0 20px; padding-left: 7px; border-right: 1px solid #eef0f4; }
.rail-list { flex: 1; min-height: 0; overflow: hidden; margin-bottom: 12px; }
.rail a { display: flex; flex-direction: column; align-items: center; width: 80px; height: 56px; margin-bottom: 12px; padding-top: 6px; border-radius: 2px; line-height: 14px; white-space: nowrap; }
.rail > a { margin-bottom: 2px; flex: none; }
.rail svg { width: 24px; height: 24px; }
.rail .on { background: #f3f4f7; color: #417ff9; }
.rail hr { height: 1px; margin: 0 11px 12px 5px; border: 0; background: #eceef2; }
.places { width: 249px; padding: 8px 15px 0; border-right: 1px solid #eef0f4; }
.places li a, .clouds a { display: flex; align-items: center; gap: 9px; height: 42px; padding-left: 14px; }
.places svg { width: 16px; height: 16px; }
.places li svg { fill: none; stroke: #3b4560; stroke-width: 1.2; }
.places ul { padding-bottom: 10px; }
.places h2 { color: #8d94a5; }
.recent { position: relative; border: solid #eceef2; border-width: 1px 0; }
.recent h2 { display: flex; align-items: center; height: 36px; padding: 2px 18px 0 15px; }
.recent h2 button { margin-left: auto; }
.recent h2 svg { width: 4px; height: 14px; }
.thumb { position: absolute; right: 0; top: 36px; bottom: -3px; width: 4px; border-radius: 2px; background: #e3e4e6; }
.browse { padding-top: 14px; }
.places .browse { padding-bottom: 27px; }
.clouds { border: solid #eceef2; border-width: 1px 0; height: 121px; }
.clouds h2 { padding: 10px 18px 7px; }
.clouds a { height: 46px; padding-left: 17px; gap: 7px; }
.clouds a + a { height: 44px; }
.quota { padding: 11px 12px 0 14px; }
.quota p { display: flex; justify-content: space-between; padding-right: 3px; }
.quota a, .quota small { color: #4f86f0; font-size: 11px; }
.quota small { display: block; line-height: 15px; }
.meter { height: 5px; border-radius: 3px; background: #e8eaee; }
.files { flex: 1; min-width: 0; padding: 14px 22px 0 9px; }
.path { display: flex; align-items: center; height: 30px; color: #a3b1d0; }
.path > button { width: 28px; padding-left: 10px; }
.path svg { width: 14px; height: 14px; }
.path .faint { color: #dde2ee; }
.crumbs { flex: 1; display: flex; align-items: center; gap: 9px; height: 30px; max-width: 536px; margin-left: 13px; padding-left: 10px; border: 1px solid #d5d7dc; border-radius: 2px; color: #3b4560; }
.crumbs svg { width: 8px; height: 12px; }
.crumbs .dbl { width: 12px; }
.path .sync { width: 58px; padding-left: 32px; margin-left: auto; border-right: 1px solid #eceef2; height: 20px; }
.path .filt { width: 32px; padding-left: 10px; }
.file { display: grid; grid-template-columns: 31px 265px 220px 1fr; align-items: center; height: 48px; margin-top: 12px; padding-left: 30px; border-radius: 3px; background: #e8ebf0; }
.file svg { width: 22px; height: 22px; }
.fdate, .fsize { color: #8a94ab; }
.info { width: 271px; padding: 10px 21px 0 19px; border-left: 1px solid #eef0f4; }
.info h1 { display: flex; align-items: center; gap: 5px; height: 18px; font-size: 14px; font-weight: 700; }
.info h1 svg { width: 16px; height: 16px; }
.where { margin-top: 9px; line-height: 15px; color: #8a94ab; white-space: nowrap; }
.meta { display: flex; gap: 15px; padding: 5px 0 16px; color: #000; }
.opt { display: flex; border-top: 1px solid #eceef2; }
.opt b { display: block; padding-left: 5px; font-weight: 400; color: #3b4560; }
.opt span { line-height: 17px; color: #000; white-space: nowrap; }
.opt.up { height: 78px; padding: 19px 0 0 3px; gap: 8px; }
.opt.pdf { padding: 17px 0 0 3px; gap: 8px; }
.opt.up svg, .opt.pdf svg { width: 26px; height: 26px; margin-top: 3px; }
.opt.send { height: 53px; padding: 20px 0 0 4px; gap: 8px; color: #3b4560; }
.opt.send svg { width: 15px; height: 15px; margin-top: 2px; }

/* recorder overlay */
.recorder { position: absolute; right: 9px; top: 24px; width: 140px; color: #fff; }
.rec-bar { display: flex; align-items: center; width: 103px; height: 41px; margin-left: auto; border: 1px solid #66768f; background: #1e2430; }
.rec-logo { width: 31px; height: 31px; margin: 0 4px; }
.pause { display: flex; gap: 3px; height: 34px; align-items: center; padding: 0 4px 0 9px; border-left: 1px solid #66768f; }
.pause i { width: 7px; height: 16px; background: #06adfb; }
.stop { display: grid; place-items: center; width: 26px; height: 26px; background: #3c4a62; }
.stop i { width: 16px; height: 16px; background: #06adfb; }
.rec-tip { margin-top: 3px; padding: 3px; height: 39px; background: #1e2430; border: 1px solid #66768f; text-align: right; white-space: nowrap; }
.rec-tip p { padding-right: 3px; line-height: 15px; }
.rec-tip p + p { border-top: 1px solid #66768f; }
.cursor { position: absolute; right: 4px; top: 24px; width: 13px; height: 20px; }
```
